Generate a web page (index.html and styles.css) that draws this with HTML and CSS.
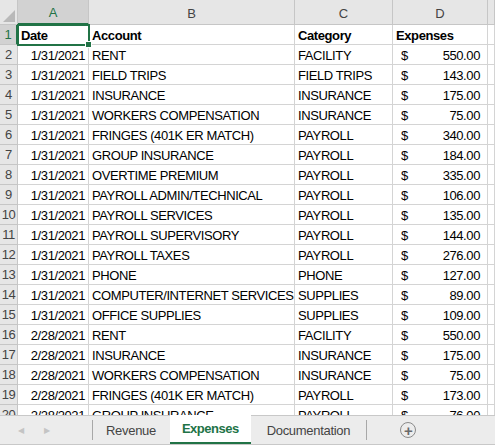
FILE: index.html
```html
<!DOCTYPE html>
<html lang="en">
<head>
  <meta charset="UTF-8">
  <title>Expenses</title>
  <link rel="stylesheet" href="styles.css">
</head>
<body>
  <div id="sheet">
    <div id="grid">
      <div class="corner"><span class="tri"></span></div>
      <div class="colhead active">A</div>
      <div class="colhead">B</div>
      <div class="colhead">C</div>
      <div class="colhead">D</div>
      <div class="colhead"></div>
    </div>
  </div>
  <div id="tabbar">
    <div class="nav"><span class="arrow">&#9664;</span><span class="arrow">&#9654;</span></div>
    <div class="tab first">Revenue</div>
    <div class="tab selected">Expenses</div>
    <div class="tab">Documentation</div>
    <div class="addtab"><span class="plus">+</span></div>
  </div>

  <script>
    var rows = [
      ["1/31/2021", "RENT", "FACILITY", "550.00"],
      ["1/31/2021", "FIELD TRIPS", "FIELD TRIPS", "143.00"],
      ["1/31/2021", "INSURANCE", "INSURANCE", "175.00"],
      ["1/31/2021", "WORKERS COMPENSATION", "INSURANCE", "75.00"],
      ["1/31/2021", "FRINGES (401K ER MATCH)", "PAYROLL", "340.00"],
      ["1/31/2021", "GROUP INSURANCE", "PAYROLL", "184.00"],
      ["1/31/2021", "OVERTIME PREMIUM", "PAYROLL", "335.00"],
      ["1/31/2021", "PAYROLL ADMIN/TECHNICAL", "PAYROLL", "106.00"],
      ["1/31/2021", "PAYROLL SERVICES", "PAYROLL", "135.00"],
      ["1/31/2021", "PAYROLL SUPERVISORY", "PAYROLL", "144.00"],
      ["1/31/2021", "PAYROLL TAXES", "PAYROLL", "276.00"],
      ["1/31/2021", "PHONE", "PHONE", "127.00"],
      ["1/31/2021", "COMPUTER/INTERNET SERVICES", "SUPPLIES", "89.00"],
      ["1/31/2021", "OFFICE SUPPLIES", "SUPPLIES", "109.00"],
      ["2/28/2021", "RENT", "FACILITY", "550.00"],
      ["2/28/2021", "INSURANCE", "INSURANCE", "175.00"],
      ["2/28/2021", "WORKERS COMPENSATION", "INSURANCE", "75.00"],
      ["2/28/2021", "FRINGES (401K ER MATCH)", "PAYROLL", "173.00"],
      ["2/28/2021", "GROUP INSURANCE", "PAYROLL", "76.00"]
    ];

    var grid = document.getElementById("grid");
    var html = "";
    html += '<div class="rowhead active">1</div>';
    html += '<div class="cell bold sel">Date<span class="handle"></span></div>';
    html += '<div class="cell bold">Account</div>';
    html += '<div class="cell bold">Category</div>';
    html += '<div class="cell bold">Expenses</div>';
    html += '<div class="cell"></div>';

    for (var i = 0; i < rows.length; i++) {
      var r = rows[i];
      html += '<div class="rowhead">' + (i + 2) + '</div>';
      html += '<div class="cell right">' + r[0] + '</div>';
      html += '<div class="cell">' + r[1] + '</div>';
      html += '<div class="cell">' + r[2] + '</div>';
      html += '<div class="cell money"><span>$</span><span>' + r[3] + '</span></div>';
      html += '<div class="cell"></div>';
    }
    grid.insertAdjacentHTML("beforeend", html);
  </script>
</body>
</html>
```

FILE: styles.css
```css
body {
  margin: 0;
  background-color: #fff;
  font-family: "Liberation Sans", Arial, sans-serif;
  font-size: 13px;
  letter-spacing: -0.4px;
  color: #000;
  width: 495px;
  height: 447px;
  overflow: hidden;
}

#sheet {
  height: 415px;
  overflow: hidden;
}

#grid {
  display: grid;
  grid-template-columns: 18px 71px 206px 98px 95px 1fr;
  grid-template-rows: 25px;
  grid-auto-rows: 20px;
}

.corner {
  background-color: #e6e6e6;
  border-right: 1px solid #c6c6c6;
  border-bottom: 1px solid #c6c6c6;
  position: relative;
}

.tri {
  position: absolute;
  right: 2px;
  bottom: 2px;
  width: 0;
  height: 0;
  border-left: 12px solid transparent;
  border-bottom: 12px solid #b9b9b9;
}

.colhead {
  background-color: #e6e6e6;
  border-right: 1px solid #c6c6c6;
  border-bottom: 1px solid #c6c6c6;
  display: flex;
  align-items: center;
  justify-content: center;
  color: #444;
  padding-top: 2px;
  letter-spacing: 0;
}

.colhead.active {
  background-color: #d2d2d2;
  color: #217346;
  border-bottom: 2px solid #217346;
}

.rowhead {
  background-color: #e6e6e6;
  border-right: 1px solid #c6c6c6;
  border-bottom: 1px solid #c6c6c6;
  display: flex;
  align-items: center;
  justify-content: center;
  color: #444;
}

.rowhead.active {
  background-color: #d2d2d2;
  color: #217346;
  border-right: 2px solid #217346;
}

.cell {
  border-right: 1px solid #d4d4d4;
  border-bottom: 1px solid #d4d4d4;
  padding: 0 3px 1px 3px;
  display: flex;
  align-items: flex-end;
  white-space: nowrap;
  position: relative;
}

.bold {
  font-weight: bold;
}

.right {
  justify-content: flex-end;
}

.money {
  justify-content: space-between;
  padding-left: 8px;
  padding-right: 7px;
}

.sel {
  outline: 2px solid #217346;
  outline-offset: -1px;
  z-index: 1;
}

.handle {
  position: absolute;
  right: -4px;
  bottom: -4px;
  width: 5px;
  height: 5px;
  background-color: #217346;
  border: 1px solid #fff;
}

#tabbar {
  height: 28px;
  background-color: #ececec;
  border-top: 1px solid #c8c8c8;
  border-bottom: 1px solid #c8c8c8;
  display: flex;
  align-items: stretch;
  color: #444;
  letter-spacing: -0.3px;
}

.nav {
  width: 93px;
  display: flex;
  align-items: center;
  padding-left: 18px;
  gap: 20px;
  border-right: 1px solid #a8a8a8;
  margin: 4px 0;
  box-sizing: border-box;
}

.arrow {
  color: #c4c4c4;
  font-size: 8px;
}

.tab {
  display: flex;
  align-items: center;
  padding: 0 16px;
}

.tab.first {
  padding-left: 13px;
  padding-right: 14px;
}

.tab.selected {
  background-color: #fff;
  color: #217346;
  font-weight: bold;
  border-bottom: 2px solid #217346;
  padding: 0 12px;
  margin-top: -1px;
  letter-spacing: -0.5px;
}

.addtab {
  display: flex;
  align-items: center;
  border-left: 1px solid #a8a8a8;
  margin: 4px 0;
  padding-left: 33px;
}

.plus {
  width: 14px;
  height: 14px;
  border: 1.5px solid #8a8a8a;
  border-radius: 50%;
  display: flex;
  align-items: center;
  justify-content: center;
  color: #6a6a6a;
  font-size: 15px;
  font-weight: bold;
  line-height: 1;
}
```
